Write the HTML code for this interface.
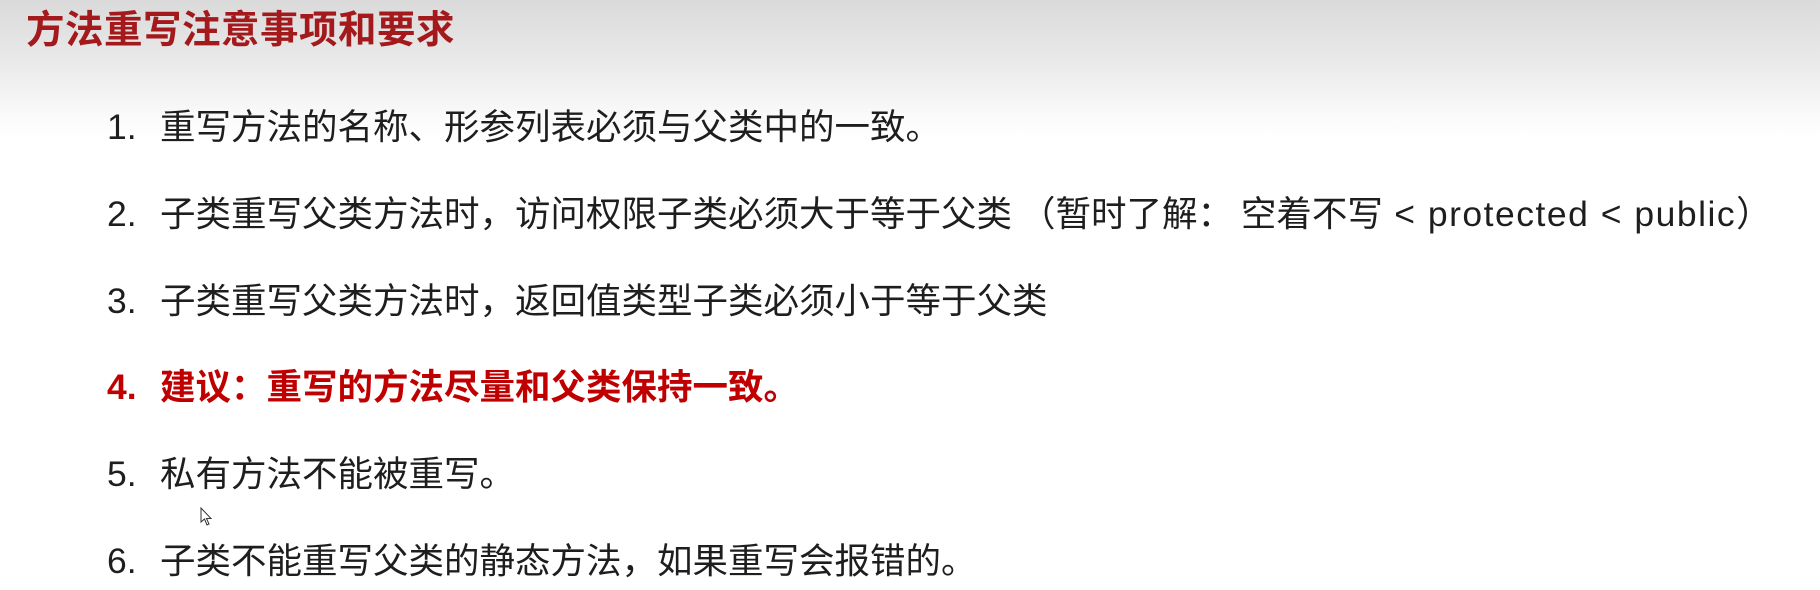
<!DOCTYPE html>
<html><head><meta charset="utf-8"><style>
html,body{margin:0;padding:0}
body{width:1820px;height:590px;position:relative;overflow:hidden;background:linear-gradient(to bottom,#dadada 0px,#e9e9e9 60px,#fbfbfb 120px,#fff 140px,#fff 590px);font-family:"Liberation Sans","Noto Sans CJK SC",sans-serif}
.t{position:absolute;left:26px;top:2px;font-size:38.5px;font-weight:bold;color:#a3191c;line-height:50px;font-family:"Noto Sans CJK SC",sans-serif;letter-spacing:0.5px}
.l{position:absolute;left:107px;font-size:35.5px;color:#1e1e1e;line-height:40px;white-space:nowrap;font-family:"Noto Sans CJK SC",sans-serif}
.l .n{display:inline-block;width:53px;font-family:"Liberation Sans","Noto Sans CJK SC",sans-serif}
.l .e{font-family:"Liberation Sans",sans-serif;letter-spacing:1.5px}
.r{color:#c00000;font-weight:bold}
</style></head><body>
<div class="t">方法重写注意事项和要求</div>
<div class="l" style="top:105px"><span class="n">1.</span>重写方法的名称、形参列表必须与父类中的一致。</div>
<div class="l" style="top:192px"><span class="n">2.</span>子类重写父类方法时，访问权限子类必须大于等于父类 （暂时了解： 空着不写<span class="e"> &lt; protected &lt; public</span>）</div>
<div class="l" style="top:279px"><span class="n">3.</span>子类重写父类方法时，返回值类型子类必须小于等于父类</div>
<div class="l r" style="top:365px"><span class="n">4.</span>建议：重写的方法尽量和父类保持一致。</div>
<div class="l" style="top:452px"><span class="n">5.</span>私有方法不能被重写。</div>
<div class="l" style="top:539px"><span class="n">6.</span>子类不能重写父类的静态方法，如果重写会报错的。</div>
<svg style="position:absolute;left:200px;top:507px" width="14" height="20" viewBox="0 0 14 20"><path d="M1 1 L1 15 L4.5 12 L7 18 L9 17 L6.5 11.5 L11 11.5 Z" fill="#fff" stroke="#333" stroke-width="1"/></svg>
</body></html>
